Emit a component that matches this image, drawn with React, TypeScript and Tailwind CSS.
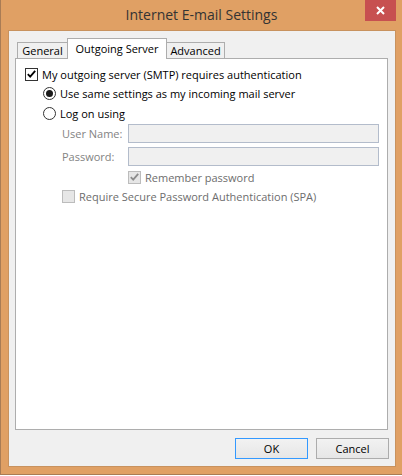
const font = { fontFamily: '"Open Sans", "Liberation Sans", sans-serif' };

function Check({ disabled = false }: { disabled?: boolean }) {
  return (
    <svg width="9" height="8" viewBox="0 0 9 8" className="block">
      <path
        d="M0.8 4.2 L3.2 6.6 L8.2 0.9"
        fill="none"
        stroke={disabled ? "#8c8c8c" : "#000"}
        strokeWidth="1.8"
      />
    </svg>
  );
}

function Checkbox({ checked, disabled = false }: { checked: boolean; disabled?: boolean }) {
  return (
    <div
      className={`w-[13px] h-[13px] shrink-0 border flex items-center justify-center ${
        disabled ? "bg-[#e6e6e6] border-[#bcbcbc]" : "bg-white border-[#333]"
      }`}
    >
      {checked && <Check disabled={disabled} />}
    </div>
  );
}

function Radio({ checked }: { checked: boolean }) {
  return (
    <div className="w-[13px] h-[13px] shrink-0 rounded-full border border-[#333] bg-white flex items-center justify-center">
      {checked && <div className="w-[7px] h-[7px] rounded-full bg-[#1a1a1a]" />}
    </div>
  );
}

export default function App() {
  return (
    <div className="w-[402px] h-[476px] bg-white overflow-hidden" style={font}>
      <div className="h-[475px] bg-[#e0a064] border-l border-b border-[#a97c55] flex flex-col">
        {/* title bar */}
        <div className="h-[30px] relative flex items-center justify-center">
          <span className="text-[14px] text-[#333] leading-none pb-[1px]">
            Internet E-mail Settings
          </span>
          <div className="absolute right-[6px] top-0 w-[31px] h-[21px] bg-[#c75050] flex items-center justify-center">
            <svg width="9" height="9" viewBox="0 0 9 9">
              <path d="M1 1 L8 8 M8 1 L1 8" stroke="#fff" strokeWidth="2" />
            </svg>
          </div>
        </div>

        {/* client area */}
        <div className="ml-[7px] mr-[6px] h-[437px] bg-[#f0f0f0] border border-[#c8925e] flex flex-col pl-[6px] pr-[7px] pt-[7px]">
          {/* tabs */}
          <div className="flex items-end h-[20px] pl-[2px] text-[11px] text-black relative z-10">
            <div className="w-[51px] h-[16px] border border-[#adadad] border-b-0 bg-[#f0f0f0] flex items-center justify-center leading-none">
              General
            </div>
            <div className="w-[100px] h-[21px] -mb-[1px] -ml-[1px] border border-[#adadad] border-b-0 bg-white flex items-start justify-center pt-[4px] leading-none">
              Outgoing Server
            </div>
            <div className="w-[59px] h-[16px] -ml-[1px] border border-[#adadad] border-b-0 bg-[#f0f0f0] flex items-center justify-center leading-none">
              Advanced
            </div>
          </div>

          {/* panel */}
          <div className="h-[372px] border border-[#adadad] bg-white pl-[9px] pt-[8px] text-[11px] leading-none">
            <div className="flex items-center h-[14px] gap-[4px]">
              <Checkbox checked />
              <span className="text-black">My outgoing server (SMTP) requires authentication</span>
            </div>

            <div className="pl-[18px]">
              <div className="flex items-center h-[14px] gap-[4px] mt-[5px]">
                <Radio checked />
                <span className="text-black">Use same settings as my incoming mail server</span>
              </div>
              <div className="flex items-center h-[14px] gap-[4px] mt-[6px]">
                <Radio checked={false} />
                <span className="text-black">Log on using</span>
              </div>

              <div className="pl-[19px] pr-[8px]">
                <div className="flex items-center h-[19px] mt-[4px]">
                  <span className="w-[66px] text-[#838383]">User Name:</span>
                  <div className="flex-1 h-[19px] bg-[#f0f0f0] border border-[#b3bccb]" />
                </div>
                <div className="flex items-center h-[19px] mt-[4px]">
                  <span className="w-[66px] text-[#838383]">Password:</span>
                  <div className="flex-1 h-[19px] bg-[#f0f0f0] border border-[#b3bccb]" />
                </div>
                <div className="flex items-center h-[14px] gap-[4px] mt-[4px] pl-[66px]">
                  <Checkbox checked disabled />
                  <span className="text-[#6d6d6d]">Remember password</span>
                </div>
                <div className="flex items-center h-[14px] gap-[4px] mt-[5px]">
                  <Checkbox checked={false} disabled />
                  <span className="text-[#6d6d6d]">Require Secure Password Authentication (SPA)</span>
                </div>
              </div>
            </div>
          </div>

          {/* buttons */}
          <div className="flex justify-end gap-[8px] mt-[8px] -mr-[1px] text-[11px] text-black">
            <button className="w-[73px] h-[21px] border border-[#3399ff] bg-gradient-to-b from-[#f2f2f2] to-[#e6e6e6] leading-none">
              OK
            </button>
            <button className="w-[73px] h-[21px] border border-[#acacac] bg-gradient-to-b from-[#f2f2f2] to-[#e6e6e6] leading-none">
              Cancel
            </button>
          </div>
        </div>
      </div>
    </div>
  );
}
